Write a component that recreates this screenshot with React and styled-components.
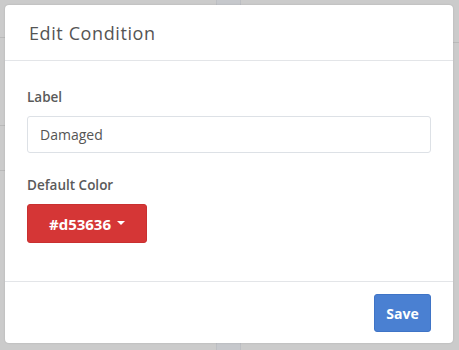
import React from "react";
import styled, { createGlobalStyle } from "styled-components";

const Global = createGlobalStyle`
  html, body { margin: 0; padding: 0; }
  body {
    width: 459px; height: 350px; overflow: hidden;
    background: #cbcbcb;
    font-family: "Open Sans", "Noto Sans", sans-serif;
  }
`;

const Backdrop = styled.div`
  position: relative;
  width: 459px;
  height: 350px;
  display: grid;
  grid-template-columns: 216px 25px 1fr;
  background: #cbcbcb;
`;

const BgCol = styled.div`
  background: ${(p) => (p.$tint ? "#c6c8cc" : "#cbcbcb")};
  border-left: ${(p) => (p.$tint ? "1px solid #bdbfc3" : "none")};
  border-right: ${(p) => (p.$tint ? "1px solid #bdbfc3" : "none")};
  display: flex;
  flex-direction: column;
`;

const BgLine = styled.div`
  height: 1px;
  margin-top: ${(p) => p.$top}px;
  background: #b9b9b9;
`;

const Modal = styled.div`
  position: absolute;
  left: 5px;
  top: 5px;
  width: 448px;
  height: 338px;
  background: #fff;
  border-radius: 4px;
  box-shadow: 0 0 2px rgba(0, 0, 0, 0.15);
  display: flex;
  flex-direction: column;
  color: #555;
`;

const Header = styled.div`
  height: 55px;
  border-bottom: 1px solid #e3e5e8;
  display: flex;
  align-items: center;
  padding: 0 24px;
`;

const Title = styled.h4`
  margin: 0;
  font-size: 18px;
  font-weight: 400;
  letter-spacing: 0.6px;
  color: #555;
`;

const Body = styled.div`
  flex: 1;
  padding: 27px 22px 0 22px;
  border-bottom: 1px solid #e3e5e8;
  display: flex;
  flex-direction: column;
`;

const Label = styled.label`
  font-size: 13.5px;
  font-weight: 600;
  color: #5a5a5a;
  line-height: 18px;
  margin-bottom: 10px;
`;

const Input = styled.input`
  box-sizing: border-box;
  width: 100%;
  height: 37px;
  border: 1px solid #dde1e6;
  border-radius: 3px;
  padding: 0 12px;
  font-family: inherit;
  font-size: 14px;
  color: #555;
  margin-bottom: 23px;
  outline: none;
`;

const ColorButton = styled.button`
  align-self: flex-start;
  box-sizing: border-box;
  width: 120px;
  height: 39px;
  border: 1px solid #c93030;
  border-radius: 3px;
  background: ${(p) => p.$color};
  color: #fff;
  font-family: inherit;
  font-size: 15px;
  font-weight: 700;
  display: flex;
  align-items: center;
  justify-content: center;
  gap: 6px;
  padding: 0;
`;

const Caret = styled.span`
  width: 0;
  height: 0;
  border-left: 4px solid transparent;
  border-right: 4px solid transparent;
  border-top: 4px solid #fff;
  margin-top: -2px;
`;

const Footer = styled.div`
  height: 61px;
  display: flex;
  align-items: center;
  justify-content: flex-end;
  padding: 0 22px;
`;

const SaveButton = styled.button`
  box-sizing: border-box;
  width: 57px;
  height: 38px;
  border: 1px solid #3f74c6;
  border-radius: 3px;
  background: #4a80d2;
  color: #fff;
  font-family: inherit;
  font-size: 14px;
  font-weight: 700;
  padding: 0;
  margin-top: 1px;
`;

export default function App() {
  const color = "#d53636";
  return (
    <>
      <Global />
      <Backdrop>
        <BgCol>
          <BgLine $top={37} />
          <BgLine $top={87} />
          <BgLine $top={44} />
        </BgCol>
        <BgCol $tint />
        <BgCol>
          <BgLine $top={42} />
        </BgCol>
        <Modal>
          <Header>
            <Title>Edit Condition</Title>
          </Header>
          <Body>
            <Label>Label</Label>
            <Input defaultValue="Damaged" />
            <Label>Default Color</Label>
            <ColorButton $color={color}>
              {color}
              <Caret />
            </ColorButton>
          </Body>
          <Footer>
            <SaveButton>Save</SaveButton>
          </Footer>
        </Modal>
      </Backdrop>
    </>
  );
}
